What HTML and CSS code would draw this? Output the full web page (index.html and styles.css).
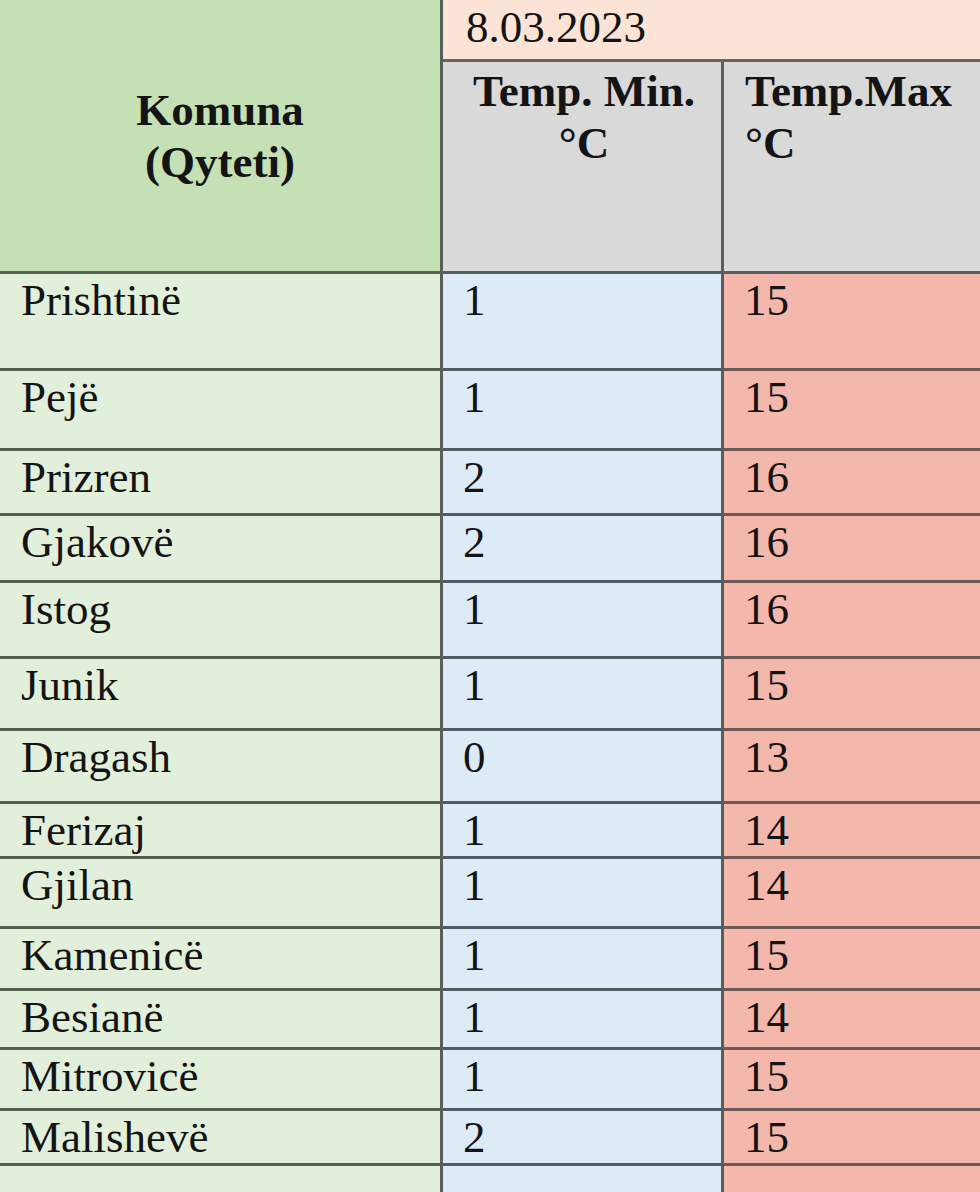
FILE: index.html
```html
<!DOCTYPE html>
<html lang="sq">
<head>
<meta charset="utf-8">
<title>Temperaturat</title>
<link rel="stylesheet" href="styles.css">
</head>
<body>
<table class="temps">
  <colgroup>
    <col class="col-name">
    <col class="col-min">
    <col class="col-max">
  </colgroup>
  <thead>
    <tr class="r-date">
      <th class="komuna" rowspan="2">Komuna<br>(Qyteti)</th>
      <th class="date" colspan="2">8.03.2023</th>
    </tr>
    <tr class="r-head">
      <th class="h-min">Temp. Min.<br>°C</th>
      <th class="h-max">Temp.Max<br>°C</th>
    </tr>
  </thead>
  <tbody>
    <tr class="r1"><td class="name">Prishtinë</td><td class="min">1</td><td class="max">15</td></tr>
    <tr class="r2"><td class="name">Pejë</td><td class="min">1</td><td class="max">15</td></tr>
    <tr class="r3"><td class="name">Prizren</td><td class="min">2</td><td class="max">16</td></tr>
    <tr class="r4"><td class="name">Gjakovë</td><td class="min">2</td><td class="max">16</td></tr>
    <tr class="r5"><td class="name">Istog</td><td class="min">1</td><td class="max">16</td></tr>
    <tr class="r6"><td class="name">Junik</td><td class="min">1</td><td class="max">15</td></tr>
    <tr class="r7"><td class="name">Dragash</td><td class="min">0</td><td class="max">13</td></tr>
    <tr class="r8"><td class="name">Ferizaj</td><td class="min">1</td><td class="max">14</td></tr>
    <tr class="r9"><td class="name">Gjilan</td><td class="min">1</td><td class="max">14</td></tr>
    <tr class="r10"><td class="name">Kamenicë</td><td class="min">1</td><td class="max">15</td></tr>
    <tr class="r11"><td class="name">Besianë</td><td class="min">1</td><td class="max">14</td></tr>
    <tr class="r12"><td class="name">Mitrovicë</td><td class="min">1</td><td class="max">15</td></tr>
    <tr class="r13"><td class="name">Malishevë</td><td class="min">2</td><td class="max">15</td></tr>
    <tr class="r14"><td class="name"></td><td class="min"></td><td class="max"></td></tr>
  </tbody>
</table>
</body>
</html>
```

FILE: styles.css
```css
html, body {
  margin: 0;
  padding: 0;
  overflow: hidden;
  background: #ffffff;
}

.temps {
  border-collapse: separate;
  border-spacing: 0;
  table-layout: fixed;
  width: 1005px;
  font-family: "Liberation Serif", "Times New Roman", serif;
  font-size: 45px;
  line-height: normal;
  color: #141414;
}

.col-name { width: 443px; }
.col-min { width: 281px; }
.col-max { width: 281px; }

.temps th,
.temps td {
  box-sizing: border-box;
  padding: 0;
  vertical-align: top;
  text-align: left;
  border-right: 3px solid #575e5c;
  border-bottom: 3px solid #575e5c;
  white-space: nowrap;
  overflow: hidden;
}

.temps th {
  font-weight: bold;
}

.komuna {
  background: #c5e0b4;
  text-align: center !important;
  vertical-align: middle !important;
  border-bottom-color: #55634f !important;
}

.date {
  background: #fbe4d5;
  font-weight: normal !important;
  padding-left: 23px !important;
  padding-top: 1px !important;
  border-bottom-color: #6d625c !important;
}

.h-min,
.h-max {
  background: #d9d9d9;
  padding-top: 3px !important;
}

.h-min {
  text-align: center !important;
  padding-left: 4px !important;
}

.h-max {
  padding-left: 21px !important;
}

.name {
  background: #e2efda;
  padding-left: 21px !important;
  border-bottom-color: #55604f !important;
}

.min {
  background: #ddebf7;
  padding-left: 20px !important;
  border-bottom-color: #515b62 !important;
}

.max {
  background: #f4b7ab;
  padding-left: 20px !important;
  border-bottom-color: #6e5855 !important;
}

.r-date { height: 62px; }
.r-head { height: 212px; }
.r1 { height: 97px; }
.r2 { height: 80px; }
.r3 { height: 65px; }
.r4 { height: 67px; }
.r5 { height: 76px; }
.r6 { height: 72px; }
.r7 { height: 73px; }
.r8 { height: 52px; }
.r9 { height: 70px; }
.r10 { height: 62px; }
.r11 { height: 59px; }
.r12 { height: 61px; }
.r13 { height: 55px; }
.r14 { height: 60px; }
```
